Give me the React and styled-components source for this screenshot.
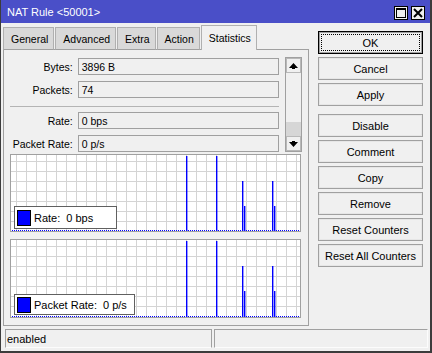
import React from "react";
import styled, { createGlobalStyle } from "styled-components";

const Global = createGlobalStyle`
  html, body { margin: 0; padding: 0; background: #f0f0f0; }
  * { box-sizing: border-box; }
  body { font-family: "Liberation Sans", Arial, sans-serif; font-size: 10.5px; color: #000; }
`;

const Window = styled.div`
  width: 432px;
  height: 353px;
  display: flex;
  flex-direction: column;
  background: #f0f0f0;
  border-style: solid;
  border-color: #3c3c3c;
  border-width: 0 2px 2px 1px;
`;

const TitleBar = styled.div`
  height: 23px;
  flex: none;
  background: #4a4fc8;
  display: flex;
  align-items: center;
  justify-content: space-between;
  padding: 0 5px 0 6px;
`;

const Title = styled.div`
  color: #fff;
  font-size: 11px;
  padding-top: 1px;
`;

const TitleButtons = styled.div`
  display: flex;
  gap: 3px;
  padding-top: 3px;
`;

const TitleBtn = styled.div`
  width: 14px;
  height: 14px;
  background: #f0f0f0;
  border: 1px solid #000;
  display: flex;
  align-items: center;
  justify-content: center;
`;

const Body = styled.div`
  flex: 1;
  display: flex;
  padding: 3px 0 0 2px;
  gap: 9px;
`;

const Left = styled.div`
  width: 306px;
  display: flex;
  flex-direction: column;
`;

const Tabs = styled.div`
  height: 24px;
  display: flex;
  align-items: flex-end;
  gap: 1px;
  position: relative;
  z-index: 1;
  margin-bottom: -1px;
`;

const Tab = styled.div`
  height: ${(p) => (p.$active ? "25px" : "23px")};
  padding: 0 5px 0 7px;
  display: flex;
  align-items: center;
  background: ${(p) => (p.$active ? "#f0f0f0" : "#d9d9d9")};
  border: 1px solid #b0b0b0;
  border-bottom: ${(p) => (p.$active ? "none" : "1px solid #a0a0a0")};
  white-space: nowrap;
`;

const Panel = styled.div`
  height: 277px;
  border: 1px solid #a0a0a0;
  padding: 7px 6px 7px 6px;
  display: flex;
  flex-direction: column;
`;

const ScrollArea = styled.div`
  height: 95px;
  display: flex;
  gap: 6px;
  margin-bottom: 2px;
`;

const Form = styled.div`
  width: 269px;
  padding-top: 1px;
  display: flex;
  flex-direction: column;
`;

const Row = styled.div`
  height: 17px;
  display: flex;
  align-items: center;
  gap: 5px;
  margin-bottom: ${(p) => p.$mb || 0}px;
`;

const Label = styled.div`
  width: 63px;
  text-align: right;
  white-space: nowrap;
`;

const Field = styled.div`
  width: 202px;
  height: 17px;
  border: 1px solid #a0a0a0;
  background: #f0f0f0;
  padding-left: 3px;
  display: flex;
  align-items: center;
`;

const Separator = styled.div`
  height: 1px;
  width: 269px;
  background: #b4b4b4;
  margin: 8px 0 5px;
`;

const Scrollbar = styled.div`
  width: 17px;
  height: 95px;
  border: 1px solid #a0a0a0;
  background: #f0f0f0;
  display: flex;
  flex-direction: column;
`;

const ScrollBtn = styled.div`
  height: 15px;
  flex: none;
  border: 1px solid #b8b8b8;
  display: flex;
  align-items: center;
  justify-content: center;
  background: #f0f0f0;
`;

const Track = styled.div`
  flex: 1;
  display: flex;
  flex-direction: column;
  justify-content: flex-end;
`;

const Thumb = styled.div`
  height: 14px;
  background: #d6d6d6;
`;

const GraphBox = styled.div`
  position: relative;
  width: 291px;
  height: ${(p) => p.$h}px;
  border: 1px solid #a0a0a0;
  background: #fff;
  margin-bottom: ${(p) => p.$mb || 0}px;
  svg { display: block; }
`;

const Legend = styled.div`
  position: absolute;
  left: 3px;
  bottom: 2px;
  width: ${(p) => p.$w}px;
  height: ${(p) => p.$h}px;
  border: 1px solid #606060;
  background: #fff;
  display: flex;
  align-items: center;
  padding: 0 0 0 2px;
  gap: 3px;
  white-space: nowrap;
  font-size: 11px;
`;

const LegendValue = styled.span`
  margin-left: 3px;
`;

const Swatch = styled.div`
  width: 14px;
  height: 16px;
  background: #0000ff;
  border: 1px solid #000;
`;

const Buttons = styled.div`
  width: 105px;
  padding-top: 5px;
  display: flex;
  flex-direction: column;
  gap: 3px;
`;

const Button = styled.div`
  height: 23px;
  display: flex;
  align-items: center;
  justify-content: center;
  background: #f0f0f0;
  border: 1px solid ${(p) => (p.$default ? "#000" : "#a0a0a0")};
  box-shadow: inset 0 0 0 1px ${(p) => (p.$default ? "#a0a0a0" : "#e6e6e6")};
  outline: ${(p) => (p.$default ? "1px dotted #000" : "none")};
  outline-offset: -4px;
  margin-top: ${(p) => p.$mt || 0}px;
  white-space: nowrap;
  font-size: 11px;
`;

const StatusBar = styled.div`
  height: 19px;
  margin: 2px 2px 3px 4px;
  display: flex;
  gap: 2px;
`;

const StatusCell = styled.div`
  width: ${(p) => (p.$w ? `${p.$w}px` : "auto")};
  flex: ${(p) => (p.$w ? "none" : "1")};
  border: 1px solid;
  border-color: #a0a0a0 #fcfcfc #fcfcfc #a0a0a0;
  ${(p) => (p.$w ? "border-right-color: #a0a0a0;" : "")}
  padding-left: 1px;
  display: flex;
  align-items: center;
  font-size: 11px;
`;

const spikes = [
  { x: 175, top: 1 },
  { x: 205, top: 1 },
  { x: 231, top: 26 },
  { x: 233, top: 51 },
  { x: 261, top: 26 },
  { x: 263, top: 51 },
];

function Graph({ h, mb, legendH, legendW, label, value }) {
  const w = 289;
  const ih = h - 2;
  const base = ih - 1;
  const vx = [];
  for (let x = 5; x < w; x += 10) vx.push(x);
  const hy = [];
  for (let y = 6; y < base; y += 10) hy.push(y);
  return (
    <GraphBox $h={h} $mb={mb}>
      <svg width={w} height={ih}>
        {vx.map((x) => (
          <rect key={"v" + x} x={x} y={0} width={1} height={ih} fill="#d4d4d4" />
        ))}
        {hy.map((y) => (
          <rect key={"h" + y} x={0} y={y} width={w} height={1} fill="#d4d4d4" />
        ))}
        <line x1={1} y1={base + 0.5} x2={w} y2={base + 0.5} stroke="#0000ff" strokeWidth={1} strokeDasharray="1 1" />
        {spikes.map((s, i) => (
          <rect key={i} x={s.x} y={s.top} width={1.4} height={base + 1 - s.top} fill="#0000ff" />
        ))}
      </svg>
      <Legend $h={legendH} $w={legendW}>
        <Swatch />
        <span>{label}:</span>
        <LegendValue>{value}</LegendValue>
      </Legend>
    </GraphBox>
  );
}

const tabs = ["General", "Advanced", "Extra", "Action", "Statistics"];
const buttons = [
  { t: "OK", d: true },
  { t: "Cancel" },
  { t: "Apply" },
  { t: "Disable", mt: 5 },
  { t: "Comment" },
  { t: "Copy" },
  { t: "Remove" },
  { t: "Reset Counters" },
  { t: "Reset All Counters" },
];

export default function App() {
  return (
    <>
      <Global />
      <Window>
        <TitleBar>
          <Title>NAT Rule &lt;50001&gt;</Title>
          <TitleButtons>
            <TitleBtn>
              <svg width="10" height="10" viewBox="0 0 10 10">
                <rect x="0.5" y="0.5" width="9" height="9" fill="none" stroke="#000" strokeWidth="1" />
                <rect x="0" y="0" width="10" height="2" fill="#000" />
              </svg>
            </TitleBtn>
            <TitleBtn>
              <svg width="10" height="10" viewBox="0 0 10 10">
                <path d="M1 1 L9 9 M9 1 L1 9" stroke="#000" strokeWidth="2" />
              </svg>
            </TitleBtn>
          </TitleButtons>
        </TitleBar>
        <Body>
          <Left>
            <Tabs>
              {tabs.map((t) => (
                <Tab key={t} $active={t === "Statistics"}>
                  {t}
                </Tab>
              ))}
            </Tabs>
            <Panel>
              <ScrollArea>
                <Form>
                  <Row $mb={6}>
                    <Label>Bytes:</Label>
                    <Field>3896 B</Field>
                  </Row>
                  <Row>
                    <Label>Packets:</Label>
                    <Field>74</Field>
                  </Row>
                  <Separator />
                  <Row $mb={6}>
                    <Label>Rate:</Label>
                    <Field>0 bps</Field>
                  </Row>
                  <Row>
                    <Label>Packet Rate:</Label>
                    <Field>0 p/s</Field>
                  </Row>
                </Form>
                <Scrollbar>
                  <ScrollBtn>
                    <svg width="9" height="6" viewBox="0 0 9 6">
                      <path d="M4.5 0 L9 5 L6 5 L6 6 L3 6 L3 5 L0 5 Z" fill="#000" />
                    </svg>
                  </ScrollBtn>
                  <Track>
                    <Thumb />
                  </Track>
                  <ScrollBtn>
                    <svg width="9" height="6" viewBox="0 0 9 6">
                      <path d="M3 0 L6 0 L6 1 L9 1 L4.5 6 L0 1 L3 1 Z" fill="#000" />
                    </svg>
                  </ScrollBtn>
                </Scrollbar>
              </ScrollArea>
              <Graph h={78} mb={7} legendH={23} legendW={103} label="Rate" value="0 bps" />
              <Graph h={79} legendH={21} legendW={121} label="Packet Rate" value="0 p/s" />
            </Panel>
          </Left>
          <Buttons>
            {buttons.map((b) => (
              <Button key={b.t} $default={b.d} $mt={b.mt}>
                {b.t}
              </Button>
            ))}
          </Buttons>
        </Body>
        <StatusBar>
          <StatusCell $w={207}>enabled</StatusCell>
          <StatusCell />
        </StatusBar>
      </Window>
    </>
  );
}
